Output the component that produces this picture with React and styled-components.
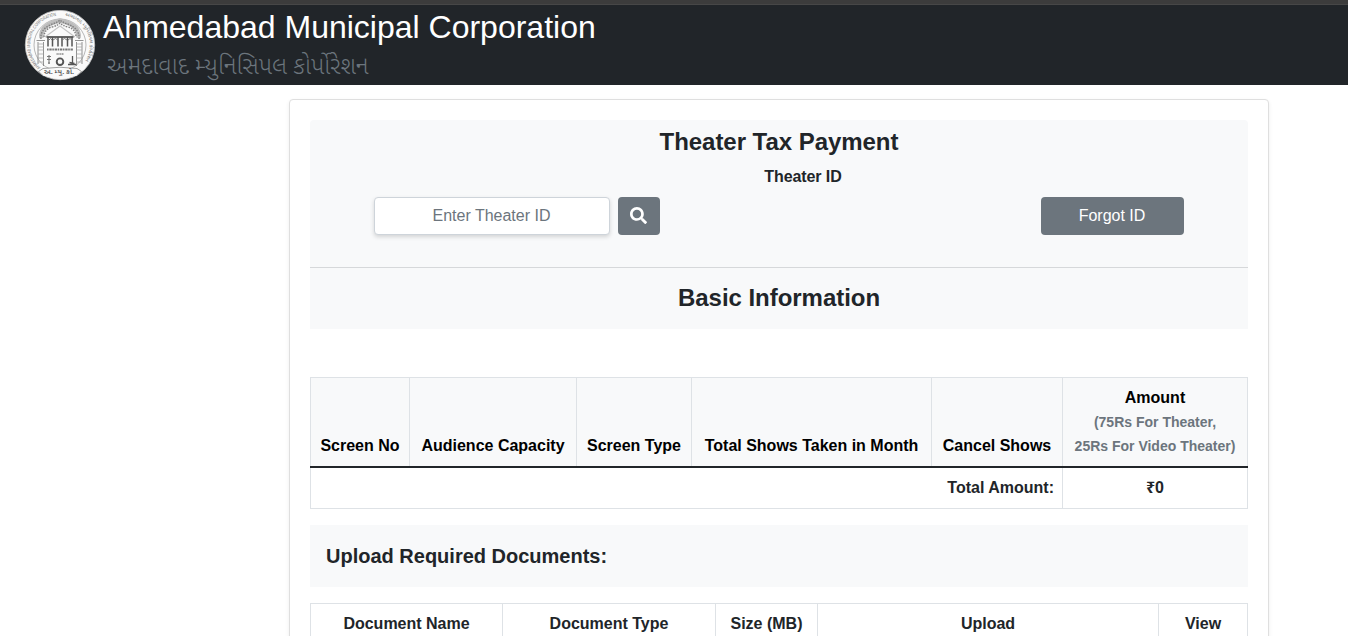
import React from "react";
import styled, { createGlobalStyle } from "styled-components";

const Global = createGlobalStyle`
  *, *::before, *::after { box-sizing: border-box; }
  body {
    margin: 0; background: #fff; color: #212529;
    font: 400 16px/24px "Liberation Sans", "Noto Sans", sans-serif;
  }
`;

const Page = styled.div`height: 636px; overflow: hidden;`;
const TopStrip = styled.div`
  height: 5px; background: #3c3c3c; border-bottom: 1px solid #474747;
`;
const Header = styled.header`
  display: flex; height: 80px; padding: 5px 0 0 24px; background: #212529;
`;
const Brand = styled.div`padding-left: 7px;`;
const BrandTitle = styled.h1`
  margin: -3px 0 0; font-size: 32px; line-height: 40px; font-weight: 400; color: #fff;
`;
const BrandSub = styled.div`
  margin: 4px 0 0 4px; font-size: 23.9px; line-height: 36px; color: #6c757d; white-space: nowrap;
  font-family: "Noto Sans Gujarati", "Liberation Sans", sans-serif; font-weight: 300;
`;
const Card = styled.main`
  width: 980px; height: 700px; margin: 14px 0 0 289px; padding: 20px;
  border: 1px solid #dfdfdf; border-radius: 4px; background: #fff;
  box-shadow: 0 2px 4px rgba(0, 0, 0, .075);
`;
const Panel = styled.section`
  height: 209px; background: #f8f9fa; border-radius: 4px 4px 0 0; text-align: center;
`;
const SearchArea = styled.div`height: 148px; border-bottom: 1px solid #d6d8da;`;
const Heading = styled.h2`
  margin: 0; padding-top: ${(p) => p.$top}px; font-size: 24px; line-height: 29px; font-weight: 700;
  letter-spacing: -.04px;
`;
const FieldLabel = styled.div`margin: 9px 0 0 48px; line-height: 24px; font-weight: 700; letter-spacing: -.08px;`;
const Controls = styled.div`
  display: flex; padding: 0 64px; margin-top: 8px; height: 38px;
`;
const IdInput = styled.input`
  width: 236px; height: 38px; padding: 6px 13px 6px 12px; border: 1px solid #ced4da; border-radius: 4px;
  font: inherit; text-align: center; background: #fff; box-shadow: 0 2px 4px rgba(0, 0, 0, .15);
  &::placeholder { color: #6c757d; opacity: 1; }
`;
const Button = styled.button`
  width: ${(p) => p.$w}px; height: 38px; padding: 0 1px 0 0; border: 0; border-radius: 4px;
  background: #6c757d; color: #fff; font: inherit;
  display: flex; align-items: center; justify-content: center;
`;
const SearchButton = styled(Button)`margin: 0 auto 0 8px; padding: 0 1px 2px 0;`;
const Table = styled.table`
  width: 938px; table-layout: fixed; border-collapse: collapse; margin-top: ${(p) => p.$top}px;
`;
const Th = styled.th`
  height: ${(p) => p.$h}px; padding: 8px 0; border: 1px solid #dee2e6; vertical-align: bottom;
  text-align: center; font-weight: 700; white-space: nowrap;
`;
const ScreenTh = styled(Th)`
  padding-top: 7px; background: #f8f9fa; color: #000; border-bottom: 2px solid #212529;
`;
const Note = styled.div`font-size: 14px; line-height: 24px; color: #6c757d;`;
const Td = styled.td`
  height: 41px; padding: 8px; border: 1px solid #dee2e6; font-weight: 700; text-align: ${(p) => p.$align};
`;
const UploadBar = styled.h3`
  height: 62px; margin: 16px 0 0; padding: 19px 16px; background: #f8f9fa;
  font-size: 20px; line-height: 24px; font-weight: 700;
`;

const SearchIcon = () => (
  <svg width="17" height="17" viewBox="0 0 512 512" fill="#fff">
    <path d="M505 442.700 405.300 343c-4.500-4.500-10.600-7-17-7H372c27.600-35.300 44-79.700 44-128C416 93.100 322.900 0 208 0S0 93.100 0 208s93.100 208 208 208c48.300 0 92.700-16.400 128-44v16.300c0 6.400 2.500 12.500 7 17l99.700 99.700c9.400 9.400 24.600 9.400 33.900 0l28.300-28.300c9.400-9.400 9.400-24.600.1-34zM208 336c-70.700 0-128-57.200-128-128 0-70.700 57.200-128 128-128 70.700 0 128 57.200 128 128 0 70.700-57.200 128-128 128z" />
  </svg>
);

const Seal = () => (
  <svg width="72" height="72" viewBox="0 0 72 72" fill="none">
    <circle cx="36" cy="35" r="34.700" fill="#fafafa" stroke="#c4c4c4" strokeWidth=".8" />
    <circle cx="36" cy="35" r="26" stroke="#999" strokeWidth=".7" />
    <defs>
      <path id="ringLeft" d="M16.500 57.500A29.500 29.500 0 0 1 33 5.700" />
      <path id="ringRight" d="M41 5.900A29.500 29.500 0 0 1 57 56" />
    </defs>
    <g fill="#6d6d6d" fontFamily="Liberation Sans" fontSize="4.600">
      <text><textPath href="#ringLeft" textLength="68" lengthAdjust="spacingAndGlyphs">AHMEDABAD MUNICIPAL CORPORATION</textPath></text>
      <text fontFamily="Noto Sans Gujarati" fontSize="5"><textPath href="#ringRight" textLength="58" lengthAdjust="spacingAndGlyphs">અમદાવાદ મ્યુનિસિપલ કોર્પોરેશન</textPath></text>
    </g>
    {/* carved arch over the gate */}
    <path d="M17.500 28C16 18 25 13 36 10.500 47 13 56 18 54.500 28" stroke="#bdbdbd" strokeWidth="4.500" />
    <path d="M17 29c-1-8 5-12 9-14s7-2 10-5c3 3 6 3 10 5s10 6 9 14M20 27c0-6 4-9 8-10s6-2 8-4c2 2 4 3 8 4s8 4 8 10" stroke="#808080" strokeWidth="1.400" strokeDasharray="1.600 1.100" />
    <path d="M21 27 36 16l15 11" stroke="#c4c4c4" strokeWidth="1.100" />
    {/* side pillars */}
    <path d="M12.500 30.500h8.500M51 30.500h8.500M14 32v22M19.500 32v24M52.500 32v24M58 32v22" stroke="#777" strokeWidth=".8" />
    <path d="M14 34h5.500M14 37h5.500M14 40h5.500M14 44h5.500M14 48h5.500M14 52h5.500M52.500 34H58M52.500 37H58M52.500 40H58M52.500 44H58M52.500 48H58M52.500 52H58" stroke="#aaa" strokeWidth=".8" />
    {/* three bay gate */}
    <path d="M22.500 27h27" stroke="#555" strokeWidth="1.800" />
    <path d="M24 27v9.500M28.500 27v9.500M34 27v9.500M38 27v9.500M43.500 27v9.500M48 27v9.500" stroke="#555" strokeWidth="1.500" />
    <path d="M25 30q1.500-3 3 0M29 30q2.500-3 5 0M38 30q2.500-3 5 0M44 30q2-3 4 0" stroke="#777" strokeWidth="1" />
    <path d="M23 39.500h26" stroke="#777" strokeWidth="2" strokeDasharray="1.600 .7 2.400 .6" />
    <path d="M32.500 44h7.500" stroke="#888" strokeWidth="1.700" strokeDasharray="1.300 .5" />
    <circle cx="36" cy="51.700" r="3.300" stroke="#555" strokeWidth="1.900" />
    <path d="M25 45v9M23 46.500h4M23 49.500h4M24 53h2" stroke="#777" strokeWidth="1.100" />
    <path d="M48.500 46v8M44 54.500h8M45.500 52.500l5 1" stroke="#555" strokeWidth="1.300" />
    <path d="M14.500 61.500Q36 53 57.500 61.500L52.500 66H19.500Z" fill="#fafafa" />
    <path d="M14.500 61.500 19 58.500Q36 56 53 58.500L57.500 61.500M14.500 61.500 19.500 66M57.500 61.500 52.500 66" stroke="#888" strokeWidth=".8" />
    <text x="20" y="64" fill="#555" fontFamily="Noto Sans Gujarati" fontSize="6.500" fontWeight="600" textLength="30" lengthAdjust="spacingAndGlyphs">અ. મ્યુ. કો.</text>
  </svg>
);

const screenCols = [99, 167, 115, 240, 131, 185];
const docCols = [192, 213, 102, 341, 89];
const Cols = ({ widths }) => <colgroup>{widths.map((w, i) => <col key={i} width={w} />)}</colgroup>;

export default function App() {
  return (
    <Page>
      <Global />
      <TopStrip />
      <Header>
        <Seal />
        <Brand>
          <BrandTitle>Ahmedabad Municipal Corporation</BrandTitle>
          <BrandSub>અમદાવાદ મ્યુનિસિપલ કોર્પોરેશન</BrandSub>
        </Brand>
      </Header>
      <Card>
        <Panel>
          <SearchArea>
            <Heading $top={7}>Theater Tax Payment</Heading>
            <FieldLabel>Theater ID</FieldLabel>
            <Controls>
              <IdInput placeholder="Enter Theater ID" />
              <SearchButton $w={42} aria-label="Search"><SearchIcon /></SearchButton>
              <Button $w={143}>Forgot ID</Button>
            </Controls>
          </SearchArea>
          <Heading $top={15}>Basic Information</Heading>
        </Panel>
        <Table $top={48}>
          <Cols widths={screenCols} />
          <thead>
            <tr>
              {["Screen No", "Audience Capacity", "Screen Type", "Total Shows Taken in Month", "Cancel Shows"].map((t) => (
                <ScreenTh key={t} $h={89}>{t}</ScreenTh>
              ))}
              <ScreenTh $h={89}>Amount<Note>(75Rs For Theater,</Note><Note>25Rs For Video Theater)</Note></ScreenTh>
            </tr>
          </thead>
          <tbody>
            <tr><Td colSpan={5} $align="right">Total Amount:</Td><Td $align="center">₹0</Td></tr>
          </tbody>
        </Table>
        <UploadBar>Upload Required Documents:</UploadBar>
        <Table $top={16}>
          <Cols widths={docCols} />
          <thead>
            <tr>{["Document Name", "Document Type", "Size (MB)", "Upload", "View"].map((t) => <Th key={t} $h={41}>{t}</Th>)}</tr>
          </thead>
        </Table>
      </Card>
    </Page>
  );
}
